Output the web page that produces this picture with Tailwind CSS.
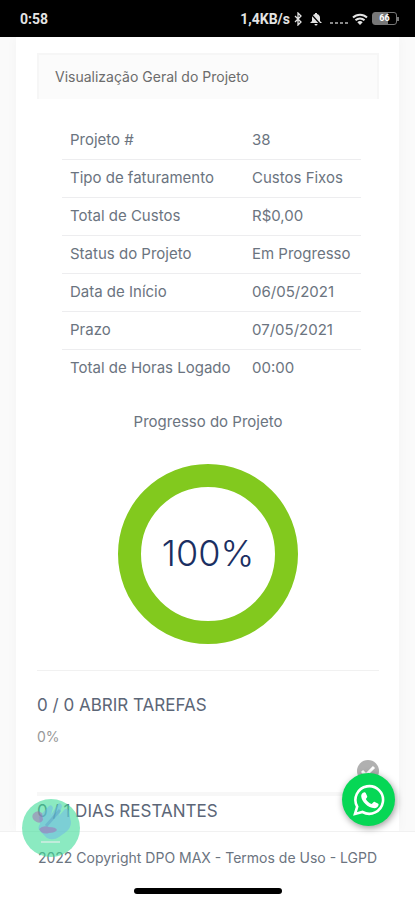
<!DOCTYPE html>
<html lang="pt-BR">
<head>
    <meta charset="UTF-8">
    <meta name="viewport" content="width=device-width, initial-scale=1.0">
    <title>Visualização Geral do Projeto</title>
    <script src="https://cdn.jsdelivr.net/npm/@tailwindcss/browser@4"></script>
</head>
<body class="flex min-h-screen flex-col bg-[#fafafa] font-['Inter',sans-serif] text-sm text-[#6b7480]">
    <!-- Status bar -->
    <header class="flex h-[37px] shrink-0 items-center justify-between bg-black pl-5 pr-4 font-['Roboto',sans-serif] font-bold text-[#e4e4e4]">
        <span>0:58</span>
        <div class="flex items-center">
            <span>1,4KB/s</span>
            <svg class="ml-1 h-[14px] w-2" viewBox="0 0 8 14" fill="none" stroke="currentColor" stroke-width="1.3"><path d="M1 4l6 6-3 3V1l3 3-6 6"/></svg>
            <svg class="ml-2 h-[14px] w-3" viewBox="0 0 12 14" fill="currentColor"><path d="M5 1h2v1c2 .5 3 2 3 4v3l2 2H0l2-2V6c0-2 1-3.500 3-4zM4.500 12h3a1.500 1.500 0 0 1-3 0z"/><path d="M1 2l10 11" stroke="#000" stroke-width="1.200"/></svg>
            <svg class="ml-2 h-[14px] w-[18px]" viewBox="0 0 18 14" fill="currentColor"><path d="M0 10h3v2H0zM5 10h3v2H5zM10 10h3v2h-3zM15 10h3v2h-3z" opacity=".6"/></svg>
            <svg class="ml-1 h-3 w-4" viewBox="0 0 16 12"><g fill="none" stroke="currentColor" stroke-width="2"><path d="M1 4.500a10 10 0 0 1 14 0M3.500 7.300a6.500 6.500 0 0 1 9 0"/></g><path d="M5.300 9.200a4 4 0 0 1 5.400 0L8 12z" fill="currentColor"/></svg>
            <div class="ml-1 flex items-center">
                <span class="flex h-[13px] w-[25px] items-center justify-center rounded-[3px] border border-[#777] bg-linear-to-r from-[#777] from-65% to-black to-65% text-[9px] text-white">66</span>
                <span class="h-1 w-0.5 bg-[#777]"></span>
            </div>
        </div>
    </header>

    <!-- Project card -->
    <main class="mx-4 grow bg-white shadow-[0_0_12px_#00000008]">
        <section class="pl-[21px] pr-5 pt-4">
            <h1 class="border-2 border-b-0 border-[#f6f6f6] bg-[#fbfbfb] px-4 py-3 text-[14px] leading-5 text-[#6c6c6c]">Visualização Geral do Projeto</h1>

            <div class="mt-[22px] mb-[25px] pl-[25px] pr-[18px]">
                <table class="w-full text-left text-[15px] leading-5">
                    <tbody class="divide-y divide-[#ededef]">
                        <tr class="h-[38px]"><th scope="row" class="w-[182px] pl-2 font-normal">Projeto #</th><td class="pl-2">38</td></tr>
                        <tr class="h-[38px]"><th scope="row" class="pl-2 font-normal">Tipo de faturamento</th><td class="pl-2">Custos Fixos</td></tr>
                        <tr class="h-[38px]"><th scope="row" class="pl-2 font-normal">Total de Custos</th><td class="pl-2">R$0,00</td></tr>
                        <tr class="h-[38px]"><th scope="row" class="pl-2 font-normal">Status do Projeto</th><td class="pl-2">Em Progresso</td></tr>
                        <tr class="h-[38px]"><th scope="row" class="pl-2 font-normal">Data de Início</th><td class="pl-2">06/05/2021</td></tr>
                        <tr class="h-[38px]"><th scope="row" class="pl-2 font-normal">Prazo</th><td class="pl-2">07/05/2021</td></tr>
                        <tr class="h-[38px]"><th scope="row" class="pl-2 font-normal">Total de Horas Logado</th><td class="pl-2">00:00</td></tr>
                    </tbody>
                </table>
            </div>

            <h2 class="text-center text-[15px] leading-5">Progresso do Projeto</h2>
            <div class="mx-auto mt-8 flex size-[180px] items-center justify-center rounded-full border-[23px] border-[#82c91e] text-[36px] font-light text-[#1b2f62]">100%</div>

            <hr class="mt-[26px] border-[#f1f1f1]">

            <h3 class="mt-[22px] text-[17px] leading-6 text-[#5c6677]">0 / 0 ABRIR TAREFAS</h3>
            <p class="mt-[10px] text-[14px] leading-5 text-[#999]">0%</p>
            <svg class="ml-auto mt-[13px] size-[22px]" viewBox="0 0 22 22"><circle cx="11" cy="11" r="11" fill="#b0b0b0"/><path d="M5 11l4 4 8-8" fill="none" stroke="#fff" stroke-width="3"/></svg>
        </section>
        <section class="ml-[21px] mr-5 mt-[10px] border-t-4 border-[#f7f7f7] pt-[3px] pb-[6px]">
            <h3 class="text-[17px] leading-6 text-[#5c6677]">0 / 1 DIAS RESTANTES</h3>
        </section>
    </main>

    <footer class="flex h-[69px] shrink-0 flex-col items-center justify-between border-t border-[#f1f1f1] bg-white pt-4 pb-[6px] text-[14px] leading-5">
        <p>2022 Copyright DPO MAX - <a href="#">Termos de Uso</a> - <a href="#">LGPD</a></p>
        <div class="h-[6px] w-[148px] rounded-full bg-black"></div>
    </footer>

    <!-- Floating buttons -->
    <button type="button" aria-label="Acessibilidade" class="fixed bottom-[43px] left-[22px] size-[58px] overflow-hidden rounded-full bg-[#3ddc98]/60">
        <svg class="size-full" viewBox="0 0 58 58">
            <!-- Hand -->
            <path d="M17 18L27 7q3-2 4 2l-2 7 7-11q3-2 4 2l-3 10 6-7q4-1 4 4l2 9q0 6-5 10l-7 5q-6 4-12 1l-7-7q-3-3 0-7z" fill="#6db4ea" opacity=".5"/>
            <path d="M38 11L24 27" stroke="#4b83bd" stroke-width="3" opacity=".3"/>
            <path d="M11 15q4-5 9-1l1 7q-3 5-8 1-4-3-2-7zM17 30q4-4 10-2 7 0 8 3-2 3-8 3-7 2-10-4z" fill="#a765b5" opacity=".5"/>
            <path d="M19 43h19" stroke="#d7eee7" stroke-width="2" opacity=".7"/>
        </svg>
    </button>
    <a href="#" aria-label="WhatsApp" class="fixed right-5 bottom-[74px] flex size-[53px] items-center justify-center rounded-full bg-[#06d755] shadow-[1px_2px_7px_#00000066]">
        <svg class="size-8" viewBox="0 0 32 32">
            <path d="M2 30l2.200-7.300A13.800 13.800 0 1 1 9.500 28z" fill="none" stroke="#fff" stroke-width="2.600"/>
            <path d="M10.700 8.500c.7-.3 1.600-.3 2 .4l1.500 3.300c.2.600 0 1-.4 1.500l-1 1.200c1.500 2.500 3.100 4 5.900 5.200l1.500-1.700c.5-.6 1-.7 1.600-.4l3.100 1.500c.6.300.8.700.7 1.300-.3 2.100-2.200 3.400-4.100 3.400-6.700-.4-13-6.700-13.300-12-.1-1.600.9-3.200 2.500-3.700z" fill="#fff"/>
        </svg>
    </a>
</body>
</html>
